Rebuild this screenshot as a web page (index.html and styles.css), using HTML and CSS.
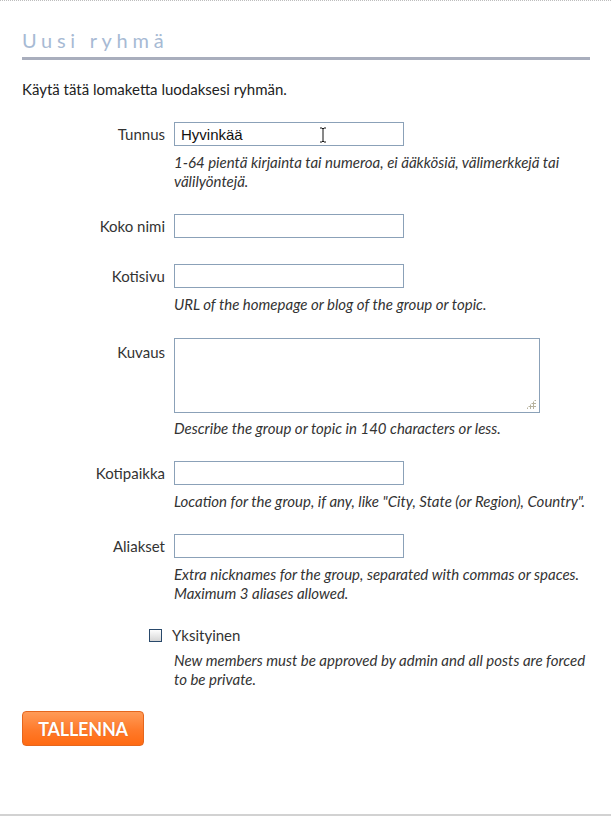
FILE: index.html
```html
<!DOCTYPE html>
<html lang="fi">
<head>
<meta charset="utf-8">
<title>Uusi ryhmä</title>
<link rel="stylesheet" href="styles.css">
</head>
<body>
<div class="page">
  <h1 class="title">Uusi ryhmä</h1>
  <p class="intro">Käytä tätä lomaketta luodaksesi ryhmän.</p>
  <form class="form">
    <div class="row">
      <label class="label">Tunnus</label>
      <div class="field">
        <div class="input-wrap">
          <input class="input" type="text" value="Hyvinkää">
          <svg class="cursor" width="8" height="16" viewBox="0 0 8 16"><path d="M1 1h2l1 1 1-1h2M4 2v12M1 15h2l1-1 1 1h2" fill="none" stroke="#111" stroke-width="1"/></svg>
        </div>
        <p class="hint">1-64 pientä kirjainta tai numeroa, ei ääkkösiä, välimerkkejä tai välilyöntejä.</p>
      </div>
    </div>
    <div class="row row-plain">
      <label class="label">Koko nimi</label>
      <div class="field"><input class="input" type="text"></div>
    </div>
    <div class="row row-url">
      <label class="label">Kotisivu</label>
      <div class="field">
        <input class="input" type="text">
        <p class="hint">URL of the homepage or blog of the group or topic.</p>
      </div>
    </div>
    <div class="row row-desc">
      <label class="label label-top">Kuvaus</label>
      <div class="field">
        <div class="textarea-wrap">
          <textarea class="textarea"></textarea>
          <span class="grip"></span>
        </div>
        <p class="hint hint-desc">Describe the group or topic in 140 characters or less.</p>
      </div>
    </div>
    <div class="row">
      <label class="label">Kotipaikka</label>
      <div class="field">
        <input class="input" type="text">
        <p class="hint">Location for the group, if any, like "City, State (or Region), Country".</p>
      </div>
    </div>
    <div class="row">
      <label class="label">Aliakset</label>
      <div class="field">
        <input class="input" type="text">
        <p class="hint">Extra nicknames for the group, separated with commas or spaces. Maximum 3 aliases allowed.</p>
      </div>
    </div>
    <div class="row row-check">
      <div class="label check-cell"><span class="checkbox"></span></div>
      <div class="field">
        <div class="check-label">Yksityinen</div>
        <p class="hint">New members must be approved by admin and all posts are forced to be private.</p>
      </div>
    </div>
    <div class="actions">
      <button class="button" type="button">TALLENNA</button>
    </div>
  </form>
  <div class="footer"></div>
</div>
</body>
</html>
```

FILE: styles.css
```css
html, body {
  margin: 0;
  padding: 0;
  background: #fff;
}

body {
  font-family: Lato, "Open Sans", sans-serif;
  font-size: 15px;
  color: #222;
  height: 817px;
  overflow: hidden;
}

.page {
  border-top: 1px dotted #bdbdbd;
  height: 816px;
  display: flex;
  flex-direction: column;
  box-sizing: border-box;
}

.title {
  margin: 0 21px 0 22px;
  padding: 26px 0 4px 0;
  font-family: Lato, sans-serif;
  font-weight: normal;
  font-size: 20px;
  line-height: 26px;
  letter-spacing: 4.7px;
  color: #a7bad4;
  border-bottom: 3px solid #a9aebd;
}

.intro {
  margin: 20px 22px 0 22px;
  line-height: 19px;
  color: #222;
}

.form {
  margin: 23px 21px 0 22px;
}

.row {
  display: flex;
  align-items: flex-start;
  margin-bottom: 23px;
}

.row-plain {
  margin-bottom: 26px;
}

.row-url {
  margin-bottom: 24px;
}

.label {
  flex: 0 0 143px;
  text-align: right;
  padding-right: 9px;
  line-height: 24px;
  color: #333;
}

.label-top {
  line-height: 19px;
  padding-top: 5px;
}

.field {
  flex: 1 1 auto;
}

.input-wrap {
  position: relative;
  width: 230px;
}

.input {
  display: block;
  box-sizing: border-box;
  width: 230px;
  height: 24px;
  margin: 0;
  padding: 0 6px;
  border: 1px solid #8ba1b8;
  border-radius: 0;
  background: #fff;
  font-family: "Liberation Sans", Arial, sans-serif;
  font-size: 15px;
  color: #111;
  outline: none;
}

.cursor {
  position: absolute;
  left: 145px;
  top: 5px;
}

.textarea-wrap {
  position: relative;
  width: 366px;
  height: 75px;
}

.textarea {
  display: block;
  box-sizing: border-box;
  width: 366px;
  height: 75px;
  margin: 0;
  border: 1px solid #8ba1b8;
  border-radius: 0;
  resize: none;
  outline: none;
  font-family: "Liberation Sans", Arial, sans-serif;
  font-size: 14px;
}

.grip {
  position: absolute;
  right: 4px;
  bottom: 4px;
  width: 10px;
  height: 10px;
  background-image: radial-gradient(circle, #b8b39e 0 1.1px, transparent 1.3px);
  background-size: 3px 3px;
  clip-path: polygon(100% 0, 100% 100%, 0 100%);
}

.hint {
  margin: 7px 0 0 0;
  font-style: italic;
  line-height: 19px;
  color: #333;
  max-width: 416px;
}

.hint-desc {
  margin-top: 6px;
}

.row-check {
  margin-bottom: 22px;
}

.check-cell {
  display: flex;
  justify-content: flex-end;
  padding-top: 3px;
  line-height: 19px;
}

.checkbox {
  display: block;
  width: 11px;
  height: 11px;
  margin-right: 3px;
  border: 1px solid #29496b;
  background: linear-gradient(#fdfdfd, #d6d6d6);
}

.check-label {
  line-height: 19px;
  color: #333;
  margin-left: -2px;
}

.row-check .hint {
  margin-top: 6px;
}

.actions {
  margin-top: 0;
}

.button {
  display: block;
  width: 122px;
  height: 35px;
  padding: 0;
  border: 1px solid #e5661d;
  border-radius: 4px;
  background: linear-gradient(#ff9b58, #ff7a2a 55%, #ff6a12);
  color: #fff;
  font-family: Lato, sans-serif;
  font-weight: bold;
  font-size: 18px;
  letter-spacing: -0.2px;
  text-shadow: 0 0 1px rgba(160, 60, 0, 0.5);
  cursor: pointer;
}

.footer {
  margin-top: auto;
  border-bottom: 2px solid #d2d2d2;
}
```
